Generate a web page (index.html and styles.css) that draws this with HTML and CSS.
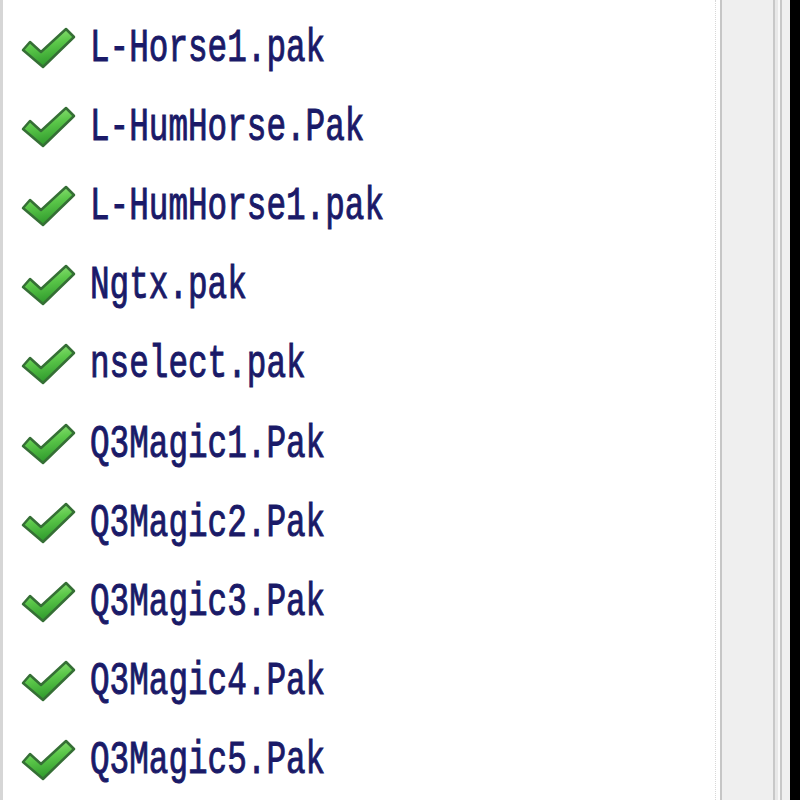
FILE: index.html
```html
<!DOCTYPE html>
<html lang="en">
<head>
    <meta charset="UTF-8">
    <title>Pak files</title>
    <link rel="stylesheet" href="styles.css">
</head>
<body>
    <div class="ventana">
        <ul class="lista">
            <li><svg class="ok" viewBox="0 0 56 44"><use href="#check"/></svg><span class="nombre">L-Horse1.pak</span></li>
            <li><svg class="ok" viewBox="0 0 56 44"><use href="#check"/></svg><span class="nombre">L-HumHorse.Pak</span></li>
            <li><svg class="ok" viewBox="0 0 56 44"><use href="#check"/></svg><span class="nombre">L-HumHorse1.pak</span></li>
            <li><svg class="ok" viewBox="0 0 56 44"><use href="#check"/></svg><span class="nombre">Ngtx.pak</span></li>
            <li><svg class="ok" viewBox="0 0 56 44"><use href="#check"/></svg><span class="nombre">nselect.pak</span></li>
            <li><svg class="ok" viewBox="0 0 56 44"><use href="#check"/></svg><span class="nombre">Q3Magic1.Pak</span></li>
            <li><svg class="ok" viewBox="0 0 56 44"><use href="#check"/></svg><span class="nombre">Q3Magic2.Pak</span></li>
            <li><svg class="ok" viewBox="0 0 56 44"><use href="#check"/></svg><span class="nombre">Q3Magic3.Pak</span></li>
            <li><svg class="ok" viewBox="0 0 56 44"><use href="#check"/></svg><span class="nombre">Q3Magic4.Pak</span></li>
            <li><svg class="ok" viewBox="0 0 56 44"><use href="#check"/></svg><span class="nombre">Q3Magic5.Pak</span></li>
        </ul>
        <div class="barra">
            <div class="pista"></div>
            <div class="marco"></div>
            <div class="borde"></div>
        </div>
    </div>

    <!-- icono de verificado -->
    <svg width="0" height="0" class="defs">
        <defs>
            <linearGradient id="verde" x1="0" y1="0" x2="0.3" y2="1">
                <stop offset="0" stop-color="#a6ec8c"/>
                <stop offset="0.5" stop-color="#5cc84a"/>
                <stop offset="1" stop-color="#2f9a2c"/>
            </linearGradient>
            <symbol id="check" viewBox="0 0 56 44">
                <polygon points="3,23 10,15 21,25 46,2 54,10 23,40"
                         fill="url(#verde)" stroke="#356f35" stroke-width="2.5"
                         stroke-linejoin="round"/>
            </symbol>
        </defs>
    </svg>
</body>
</html>
```

FILE: styles.css
```css
html, body {
    margin: 0;
    height: 100%;
    background: #fff;
}
.defs {
    position: absolute;
}
.ventana {
    display: flex;
    height: 800px;
    overflow: hidden;
}
.lista {
    flex: 1;
    list-style: none;
    margin: 0 4px 0 0;
    padding: 9px 0 0 0;
    border-left: 3px solid #d6d6d6;
    border-right: 1px dotted #d8d8d8;
}
.lista li {
    display: flex;
    align-items: center;
    height: 79.2px;
}
.ok {
    width: 56px;
    height: 44px;
    margin-left: 17px;
    flex: none;
}
.nombre {
    display: inline-block;
    margin-left: 14px;
    font-family: "Liberation Mono", monospace;
    font-size: 46px;
    color: #1a1a68;
    -webkit-text-stroke: 1px #1a1a68;
    transform: scaleX(0.71);
    transform-origin: left center;
    white-space: nowrap;
}
.barra {
    display: flex;
    width: 80px;
    flex: none;
}
.pista {
    width: 51px;
    background: #efefef;
    border-left: 2px solid #c6c6c6;
}
/* bordes del marco de la ventana */
.marco {
    width: 17px;
    background: linear-gradient(to right,
        #c8c8c8 0 2px, #e8e8e8 2px 5px, #f8f8f8 5px 7px,
        #c8c8c8 7px 9px, #f0f0f0 9px 17px);
}
.borde {
    width: 10px;
    background: #000;
}
```
